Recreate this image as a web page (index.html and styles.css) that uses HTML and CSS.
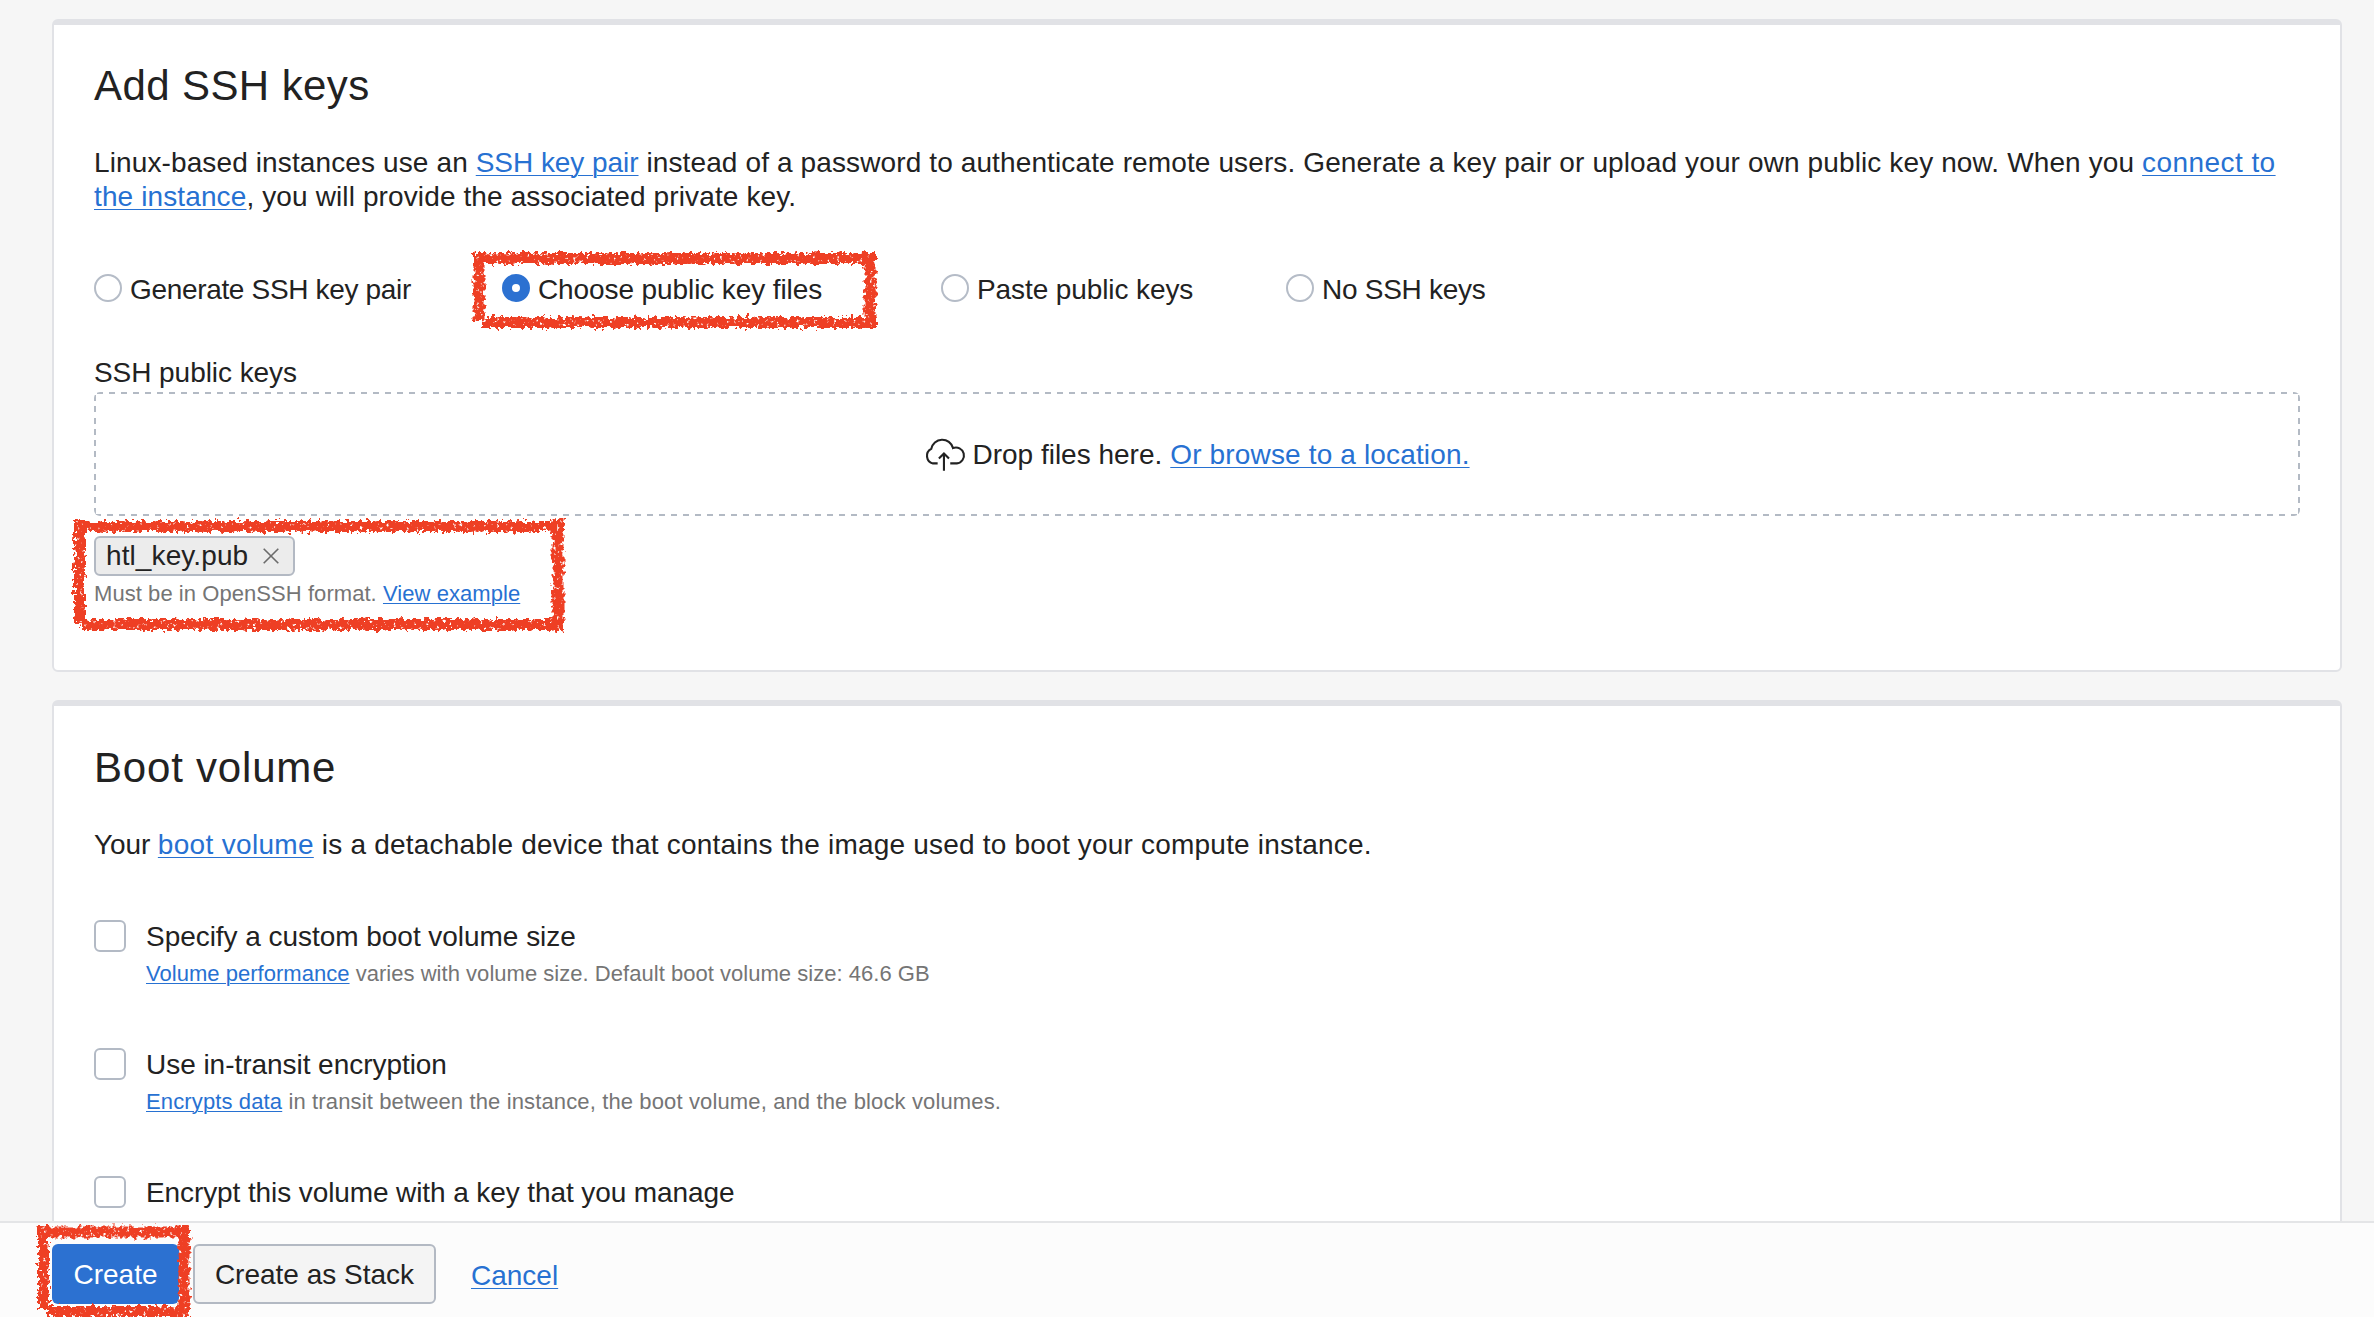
FILE: index.html
```
<!DOCTYPE html>
<html lang="en">
<head>
<meta charset="utf-8">
<title>Create compute instance</title>
<link rel="stylesheet" href="styles.css">
</head>
<body>
<main class="content">
  <section class="card">
    <h2 class="title title-ssh">Add SSH keys</h2>
    <p class="intro">Linux-based instances use an <a class="link link-pair" href="#">SSH key pair</a> instead of a password to authenticate remote users. Generate a key pair or upload your own public key now. When you <a class="link" href="#"><span class="link-connect">connect to</span><br>the instance</a>, you will provide the associated private key.</p>

    <div class="radios">
      <label class="radio radio-generate"><span class="dot"></span><span class="radio-text">Generate SSH key pair</span></label>
      <label class="radio"><span class="dot dot-on"></span><span class="radio-text">Choose public key files</span></label>
      <label class="radio"><span class="dot"></span><span class="radio-text">Paste public keys</span></label>
      <label class="radio radio-none"><span class="dot"></span><span class="radio-text">No SSH keys</span></label>
    </div>

    <div class="field-label">SSH public keys</div>
    <div class="dropzone">
      <svg class="cloud" width="42" height="34" viewBox="0 0 40 32" fill="none" stroke="#222" stroke-width="2">
        <path d="M13 24H8.6A7.4 7.4 0 0 1 6.9 10.2A10.6 10.6 0 0 1 27.6 9.4A7.6 7.6 0 1 1 31.3 24H25"/>
        <path d="M19 31V15M14.2 19.3L19 14.5L23.8 19.3"/>
      </svg>
      <span class="drop-text">Drop files here.</span>
      <a class="link link-browse" href="#">Or browse to a location.</a>
    </div>

    <div class="tag">htl_key.pub
      <svg width="16" height="16" viewBox="0 0 16 16" stroke="#6b6b6b" stroke-width="1.6"><path d="M.7 .7L15.3 15.3M15.3 .7L.7 15.3"/></svg>
    </div>
    <div class="hint hint-format">Must be in OpenSSH format. <a class="link" href="#">View example</a></div>
  </section>

  <section class="card">
    <h2 class="title title-boot">Boot volume</h2>
    <p class="intro intro-boot"><span class="your">Your </span><a class="link link-boot" href="#">boot volume</a> is a detachable device that contains the image used to boot your compute instance.</p>

    <div class="option">
      <span class="checkbox"></span>
      <div>
        <div class="option-label">Specify a custom boot volume size</div>
        <div class="hint"><a class="link" href="#">Volume performance</a> varies with volume size. Default boot volume size: 46.6 GB</div>
      </div>
    </div>
    <div class="option">
      <span class="checkbox"></span>
      <div>
        <div class="option-label">Use in-transit encryption</div>
        <div class="hint hint-transit"><a class="link" href="#">Encrypts data</a> in transit between the instance, the boot volume, and the block volumes.</div>
      </div>
    </div>
    <div class="option">
      <span class="checkbox"></span>
      <div>
        <div class="option-label option-encrypt">Encrypt this volume with a key that you manage</div>
      </div>
    </div>
  </section>
</main>

<footer class="actions">
  <button class="btn btn-primary">Create</button>
  <button class="btn btn-stack">Create as Stack</button>
  <a class="link cancel" href="#">Cancel</a>
</footer>

<!-- Crayon highlight boxes -->
<svg class="marks" width="2374" height="1317" viewBox="0 0 2374 1317" fill="none" stroke="#ee3f24" stroke-width="11">
  <defs>
    <filter id="crayon" filterUnits="userSpaceOnUse" x="0" y="200" width="2374" height="1117" color-interpolation-filters="sRGB">
      <feTurbulence type="fractalNoise" baseFrequency="0.24" numOctaves="2" seed="4" result="edge"/>
      <feDisplacementMap in="SourceGraphic" in2="edge" scale="10" xChannelSelector="R" yChannelSelector="G" result="rough"/>
      <feTurbulence type="fractalNoise" baseFrequency="0.3" numOctaves="2" seed="11" result="grain"/>
      <feColorMatrix in="grain" type="matrix" values="0 0 0 0 1  0 0 0 0 1  0 0 0 0 1  0 0 -7 0 5.5" result="holes"/>
      <feComposite in="rough" in2="holes" operator="in"/>
    </filter>
  </defs>
  <g filter="url(#crayon)">
    <path d="M473 258.5H876M479 253V321M482 322.5H876M870 253V328"/>
    <path d="M73 526.5H564M79.5 520V623M82 624.5H564M558 520V631"/>
    <path d="M37 1232H190M43.5 1226V1309M47 1311.5H190M184 1226V1317"/>
  </g>
</svg>
</body>
</html>
```
FILE: styles.css
```
* { box-sizing: border-box; }

body {
  margin: 0;
  height: 1317px;
  display: flex;
  flex-direction: column;
  overflow: hidden;
  position: relative;
  background: #f6f6f6;
  color: #222;
  font-family: "Liberation Sans", Arial, sans-serif;
  font-size: 28px;
  line-height: 34px;
}

.content {
  flex: 1;
  min-height: 0;
  overflow: hidden;
  padding: 19px 32px 0 52px;
  display: flex;
  flex-direction: column;
  gap: 28px;
}

.card {
  flex: none;
  background: #fff;
  border: 2px solid #e1e2e6;
  border-top-width: 6px;
  border-radius: 6px;
  padding: 36px 40px 63px;
}

.title {
  margin: 0 0 35px;
  font-size: 42px;
  line-height: 50px;
  font-weight: 400;
}
.title-ssh { letter-spacing: 0.4px; }
.title-boot { margin-top: 1px; letter-spacing: 0.8px; }

.link {
  color: #2771d2;
  text-decoration: underline;
  text-decoration-thickness: 1px;
  text-underline-offset: 3px;
}

.intro { margin: 0; letter-spacing: 0.12px; white-space: nowrap; }
.intro-boot { letter-spacing: 0.2px; }
.your { letter-spacing: -0.1px; }
.link-pair { letter-spacing: -0.05px; }
.link-connect { letter-spacing: 0.43px; }
.link-boot { letter-spacing: 0.31px; }
.link-browse { letter-spacing: 0.15px; }

.radios {
  display: grid;
  grid-template-columns: 408px 439px 345px auto;
  margin-top: 56px;
}
.radio {
  display: flex;
  align-items: center;
  gap: 8px;
  letter-spacing: -0.1px;
}
.radio-text { padding-top: 3px; margin-bottom: -1px; }
.radio-generate { letter-spacing: -0.33px; }
.radio-none { letter-spacing: -0.28px; }
.dot {
  width: 28px;
  height: 28px;
  border: 2px solid #b5bcc7;
  border-radius: 50%;
  background: #fff;
}
.dot-on { border: 10px solid #2c71d1; }

.field-label { margin-top: 50px; letter-spacing: -0.06px; }

/* Dashed frame: 6px dashes, 6px gaps */
.dropzone {
  margin-top: 2px;
  height: 124px;
  padding-top: 2px;
  border-radius: 6px;
  background:
    repeating-linear-gradient(90deg, transparent 0 3px, #b3bac4 3px 9px, transparent 9px 12px) 0 0 / 100% 2px no-repeat,
    repeating-linear-gradient(90deg, transparent 0 1px, #b3bac4 1px 7px, transparent 7px 12px) 0 100% / 100% 2px no-repeat,
    repeating-linear-gradient(180deg, transparent 0 3px, #b3bac4 3px 9px, transparent 9px 11.3px) 0 0 / 2px 100% no-repeat,
    repeating-linear-gradient(180deg, transparent 0 3px, #b3bac4 3px 9px, transparent 9px 11.3px) 100% 0 / 2px 100% no-repeat;
  display: flex;
  align-items: center;
  justify-content: center;
}
.cloud { margin-top: -1px; }
.drop-text { margin: 0 8px 0 6px; }

.tag {
  margin-top: 20px;
  width: 201px;
  height: 40px;
  display: flex;
  align-items: center;
  justify-content: space-between;
  padding: 0 14px 0 10px;
  border: 2px solid #b3b9c3;
  border-radius: 6px;
  background: #ececec;
  letter-spacing: 0.1px;
}

.hint {
  margin-top: 7px;
  font-size: 22px;
  line-height: 26px;
  color: #757575;
  letter-spacing: 0.03px;
  white-space: nowrap;
}
.hint .link { text-underline-offset: 2px; }
.hint-format { margin-top: 5px; letter-spacing: 0.06px; }
.hint-transit { letter-spacing: 0.13px; }

.option {
  display: flex;
  gap: 20px;
  margin-top: 61px;
}
.intro + .option { margin-top: 58px; }
.checkbox {
  width: 32px;
  height: 32px;
  border: 2px solid #b3bac5;
  border-radius: 6px;
}
.option-label { letter-spacing: -0.04px; }
.option-encrypt { letter-spacing: -0.1px; }

.actions {
  flex: none;
  height: 96px;
  display: flex;
  align-items: flex-start;
  padding: 21px 52px 0;
  border-top: 2px solid #e4e5e7;
  background: #fcfcfc;
}
.btn {
  height: 60px;
  padding: 2px 0 0;
  border-radius: 6px;
  font: inherit;
  color: #222;
}
.btn-primary {
  width: 127px;
  border: 0;
  background: #2c71d1;
  color: #fff;
}
.btn-stack {
  width: 243px;
  margin-left: 14px;
  border: 2px solid #b3b9c3;
  background: #f4f4f4;
}
.cancel { margin: 15px 0 0 35px; }

/* Highlight strokes lie over the whole page */
.marks {
  position: absolute;
  left: 0;
  top: 0;
  pointer-events: none;
}
```
